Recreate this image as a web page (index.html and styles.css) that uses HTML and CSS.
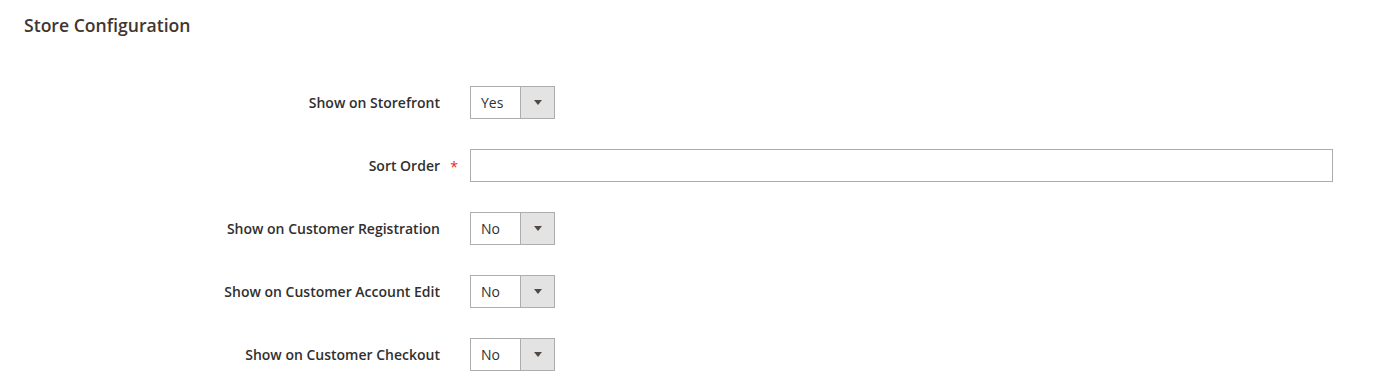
FILE: index.html
```html
<!DOCTYPE html>
<html>
<head>
<meta charset="utf-8">
<link rel="stylesheet" href="styles.css">
</head>
<body>
<div class="page">
  <h2 class="title">Store Configuration</h2>
  <div class="form">
    <div class="row">
      <label class="label">Show on Storefront</label>
      <div class="control"><div class="select"><span class="value">Yes</span><span class="btn"><span class="arrow"></span></span></div></div>
    </div>
    <div class="row">
      <label class="label required">Sort Order</label>
      <div class="control"><div class="input"></div></div>
    </div>
    <div class="row">
      <label class="label">Show on Customer Registration</label>
      <div class="control"><div class="select"><span class="value">No</span><span class="btn"><span class="arrow"></span></span></div></div>
    </div>
    <div class="row">
      <label class="label">Show on Customer Account Edit</label>
      <div class="control"><div class="select"><span class="value">No</span><span class="btn"><span class="arrow"></span></span></div></div>
    </div>
    <div class="row">
      <label class="label">Show on Customer Checkout</label>
      <div class="control"><div class="select"><span class="value">No</span><span class="btn"><span class="arrow"></span></span></div></div>
    </div>
  </div>
</div>
</body>
</html>
```
FILE: styles.css
```css
html, body {
  margin: 0;
  padding: 0;
  background: #ffffff;
}
body {
  font-family: "Open Sans", "Liberation Sans", sans-serif;
  color: #303030;
}
.page {
  padding: 0 46px 0 24px;
}
.title {
  margin: 0;
  padding-top: 14px;
  font-size: 17.6px;
  line-height: 23px;
  font-weight: 600;
  color: #41362f;
}
.form {
  margin-top: 49px;
  display: flex;
  flex-direction: column;
  gap: 30px;
}
.row {
  display: flex;
  align-items: center;
}
.label {
  width: 416px;
  text-align: right;
  font-size: 14px;
  font-weight: 600;
  color: #303030;
  position: relative;
}
.label.required::after {
  content: "*";
  position: absolute;
  right: -18px;
  top: 1px;
  color: #e22626;
  font-size: 14px;
  font-weight: 400;
}
.control {
  margin-left: 30px;
  flex: 1;
}
.select {
  display: flex;
  width: 85px;
  height: 33px;
  box-sizing: border-box;
  border: 1px solid #adadad;
  background: #fff;
}
.value {
  flex: 1;
  padding-left: 10px;
  font-size: 14px;
  line-height: 31px;
  color: #303030;
}
.btn {
  width: 33px;
  border-left: 1px solid #adadad;
  background: #e3e3e3;
  display: flex;
  align-items: center;
  justify-content: center;
}
.arrow {
  width: 0;
  height: 0;
  border-left: 4px solid transparent;
  border-right: 4px solid transparent;
  border-top: 5px solid #514943;
}
.input {
  height: 33px;
  box-sizing: border-box;
  border: 1px solid #adadad;
  background: #fff;
}
```
